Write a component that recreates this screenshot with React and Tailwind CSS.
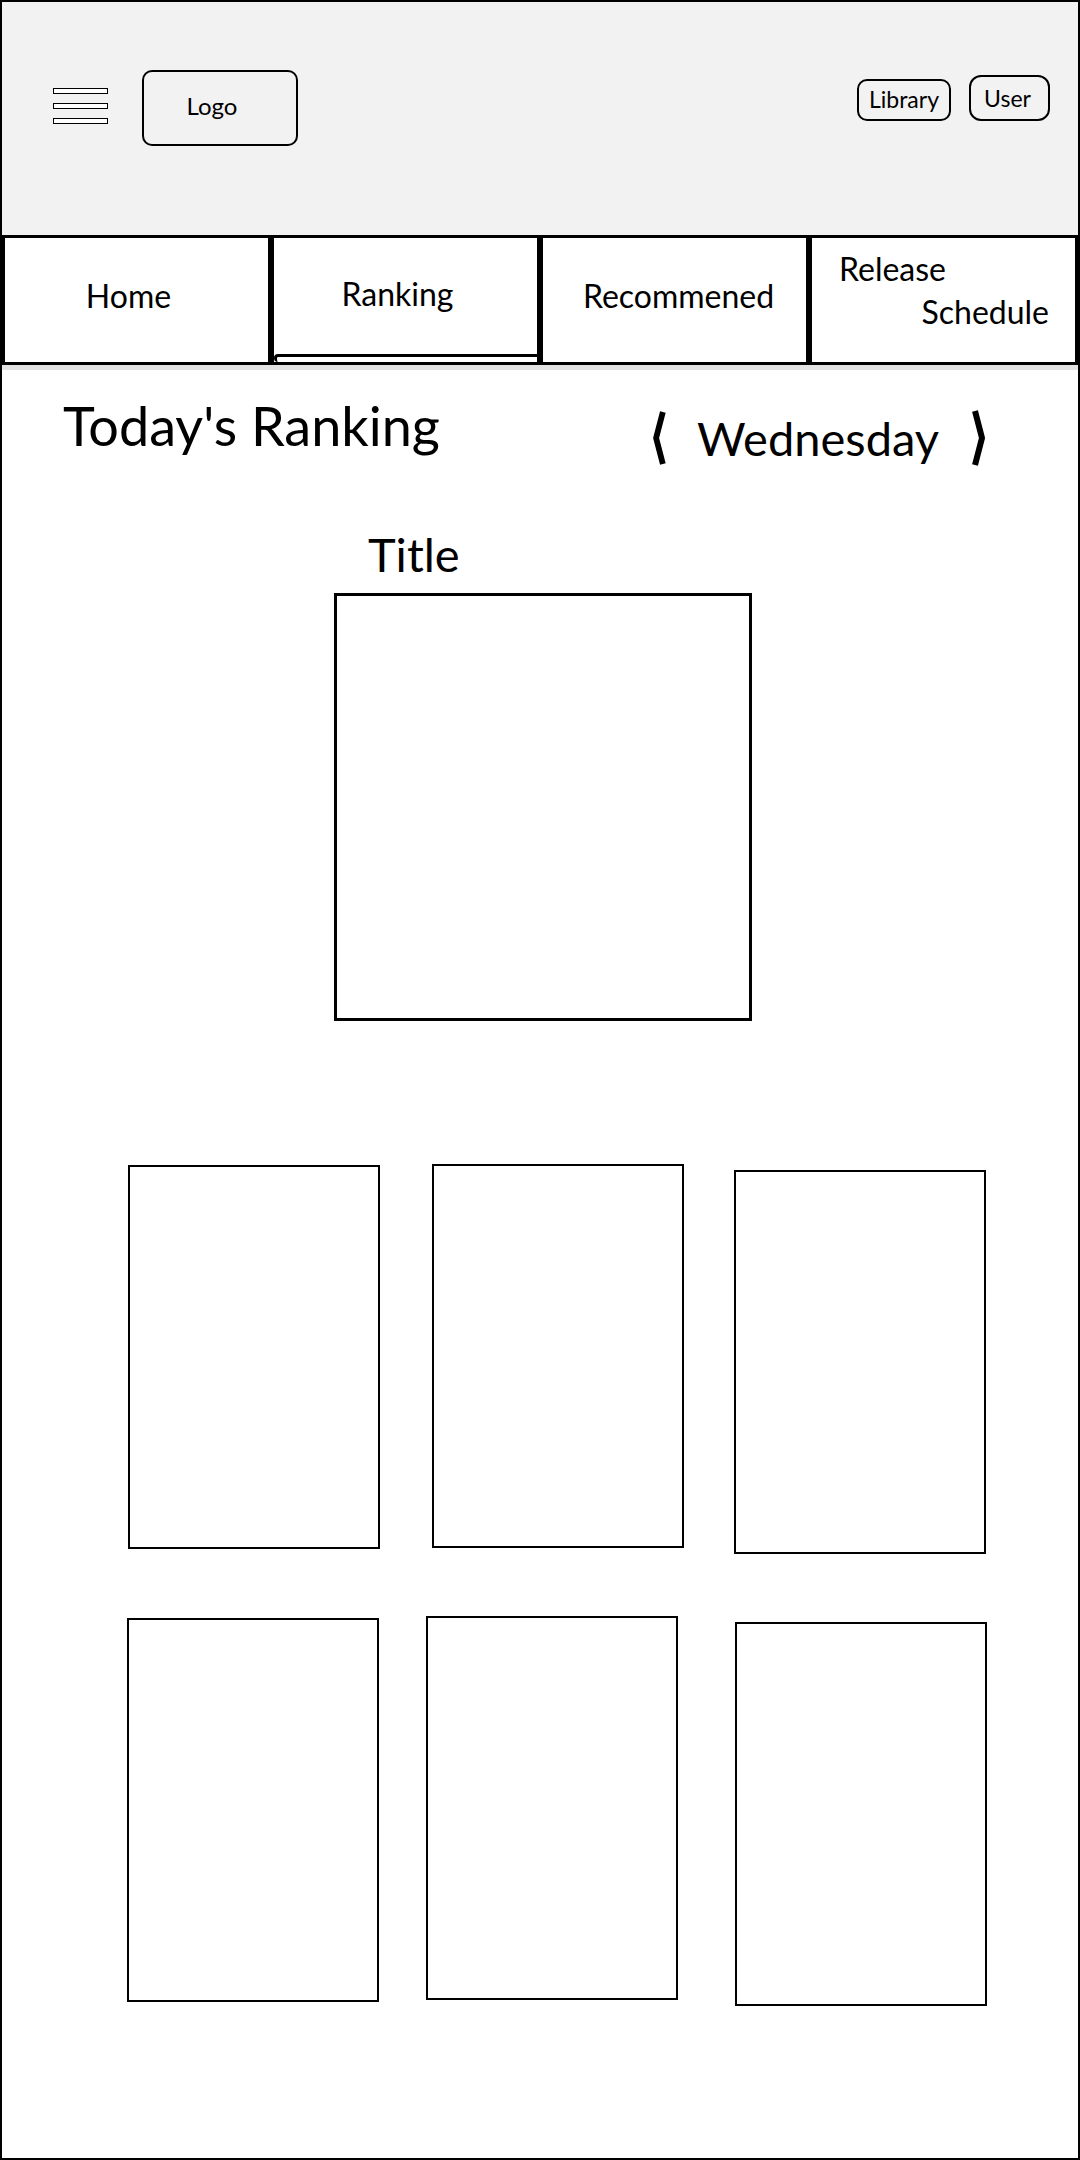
import React from "react";

const Bracket = ({ dir = "left", className = "" }) => (
  <svg viewBox="0 0 16 58" className={className} fill="none">
    {dir === "left" ? (
      <path d="M12 2 L5 29 L12 56" stroke="#000" strokeWidth="6" strokeLinejoin="round" />
    ) : (
      <path d="M4 2 L11 29 L4 56" stroke="#000" strokeWidth="6" strokeLinejoin="round" />
    )}
  </svg>
);

const Card = ({ className = "" }) => (
  <div className={`w-[252px] h-[384px] border-2 border-black bg-white shrink-0 ${className}`} />
);

export default function App() {
  return (
    <div className="w-[1080px] h-[2160px] border-2 border-black bg-white flex flex-col text-black font-[Lato,sans-serif] overflow-hidden">
      {/* Header */}
      <div className="h-[233px] bg-[#f2f2f2] flex items-start shrink-0">
        <div className="ml-[51px] mt-[86px] flex flex-col gap-[9px]">
          <div className="w-[55px] h-[6px] border border-black bg-white" />
          <div className="w-[55px] h-[6px] border border-black bg-white" />
          <div className="w-[55px] h-[6px] border border-black bg-white" />
        </div>
        <div className="ml-[34px] mt-[68px] w-[156px] h-[76px] border-2 border-black rounded-[10px] flex items-center justify-center pr-4 pb-[5px] text-[24px] leading-none">
          Logo
        </div>
        <div className="ml-auto mt-[77px] w-[94px] h-[42px] border-2 border-black rounded-[10px] flex items-center justify-center pb-[2px] text-[23px] leading-none">
          Library
        </div>
        <div className="ml-[18px] mr-[28px] mt-[73px] w-[81px] h-[46px] border-2 border-black rounded-[12px] flex items-center justify-center pr-1 text-[23px] leading-none">
          User
        </div>
      </div>

      {/* Tabs */}
      <div className="grid grid-cols-4 h-[130px] shrink-0 text-[32px] leading-none">
        <div className="border-[3px] border-black flex items-center justify-center pr-4 pb-[8px]">Home</div>
        <div className="border-[3px] border-black flex flex-col">
          <div className="flex-1 flex items-center justify-center pr-4 pb-[4px]">Ranking</div>
          <div className="h-[8px] border-t-[3px] border-l-[3px] border-black rounded-l-full" />
        </div>
        <div className="border-[3px] border-black flex items-center justify-center pl-2 pb-[8px]">Recommened</div>
        <div className="border-[3px] border-black flex flex-col pt-[9px] pl-[27px] pr-[26px] leading-[43px]">
          <span className="self-start">Release</span>
          <span className="self-end">Schedule</span>
        </div>
      </div>
      <div className="h-[5px] bg-[#e3e3e3] shrink-0" />

      {/* Heading row */}
      <div className="flex items-start pl-[61px] pr-[91px] shrink-0">
        <h1 className="mt-[29px] text-[54px] leading-none whitespace-nowrap">Today's Ranking</h1>
        <div className="ml-auto mt-[39px] flex items-center">
          <Bracket dir="left" className="w-[16px] h-[56px]" />
          <span className="ml-[30px] text-[47px] leading-none">Wednesday</span>
          <Bracket dir="right" className="ml-[32px] w-[16px] h-[58px]" />
        </div>
      </div>

      {/* Featured */}
      <div className="flex flex-col items-start pl-[332px] shrink-0">
        <div className="mt-[64px] ml-[34px] text-[47px] leading-none">Title</div>
        <div className="mt-[15px] w-[418px] h-[428px] border-[3px] border-black" />
      </div>

      {/* Grid */}
      <div className="mt-[143px] flex items-start pl-[126px] h-[452px] shrink-0">
        <Card className="mt-[1px]" />
        <Card className="ml-[52px]" />
        <Card className="ml-[50px] mt-[6px]" />
      </div>
      <div className="flex items-start pl-[125px] shrink-0">
        <Card className="mt-[2px]" />
        <Card className="ml-[47px]" />
        <Card className="ml-[57px] mt-[6px]" />
      </div>
    </div>
  );
}
